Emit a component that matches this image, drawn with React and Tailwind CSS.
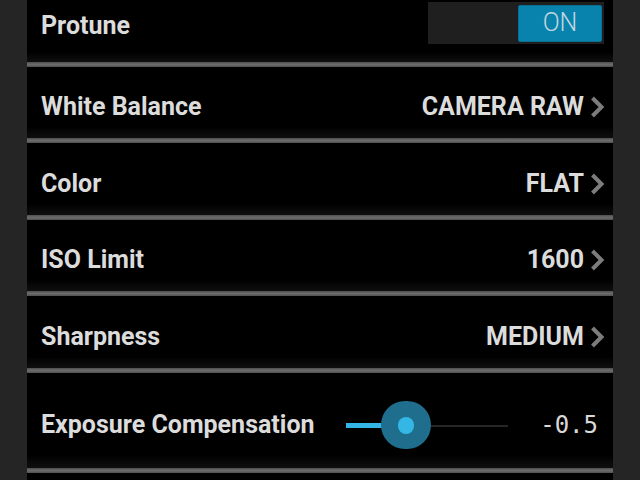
const ROWS = [
  { label: "White Balance", value: "CAMERA RAW", h: "h-[71px]" },
  { label: "Color", value: "FLAT", h: "h-[72px]" },
  { label: "ISO Limit", value: "1600", h: "h-[71px]" },
  { label: "Sharpness", value: "MEDIUM", h: "h-[72px]" },
];

function Separator() {
  return <div className="h-[5px] bg-[linear-gradient(to_bottom,#4e4e4e,#6c6c6c_50%,#505050)]" />;
}

function Chevron() {
  return (
    <svg width="15" height="22" viewBox="0 0 15 22" className="ml-[6px] shrink-0">
      <polyline points="2.5,2 11.5,11 2.5,20" fill="none" stroke="#7c7c7c" strokeWidth="4" strokeLinecap="butt" />
    </svg>
  );
}

export default function App() {
  return (
    <div
      className="w-[640px] h-[480px] overflow-hidden bg-[#252525] flex"
      style={{ fontFamily: "Roboto, 'Liberation Sans', sans-serif" }}
    >
      <div className="w-[586px] ml-[27px] bg-black flex flex-col text-[#dcdcdc]">
        {/* Protune - scrolled partly off top */}
        <div className="h-[62px] shrink-0 flex items-start pl-[14px] pr-[9px] bg-[linear-gradient(to_bottom,#000_84%,#0f0f0f)]">
          <span className="mt-[7px] text-[25px] font-bold">Protune</span>
          <div className="ml-auto mt-[2px] w-[176px] h-[42px] bg-[#1f1f1f] flex justify-end items-center pr-[2px]">
            <div className="w-[84px] h-[37px] bg-[#0883ae] border border-[#0a6f93] rounded-[2px] flex items-center justify-center text-[25px] font-light text-[#c3d6de]">
              ON
            </div>
          </div>
        </div>
        <Separator />

        {ROWS.map((r) => (
          <div key={r.label}>
            <div className={`${r.h} flex items-center pt-[9px] pl-[14px] pr-[8px] bg-[linear-gradient(to_bottom,#000_84%,#0f0f0f)]`}>
              <span className="text-[25px] font-bold">{r.label}</span>
              <span className="ml-auto text-[25px] font-bold">{r.value}</span>
              <Chevron />
            </div>
            <Separator />
          </div>
        ))}

        {/* Exposure compensation */}
        <div className="h-[95px] shrink-0 flex items-center pt-[8px] pl-[14px] bg-[linear-gradient(to_bottom,#000_86%,#0f0f0f)]">
          <span className="w-[305px] text-[25px] font-bold whitespace-nowrap">Exposure Compensation</span>
          <div className="relative w-[162px] h-[50px] mt-[2px]">
            <div className="absolute left-0 right-0 top-[24px] h-[2px] bg-[#262626]" />
            <div className="absolute left-0 w-[60px] top-[22px] h-[5px] bg-[#33b5e5]" />
            <div className="absolute left-[35px] top-0 w-[50px] h-[48px] rounded-full bg-[#1f6e8d]" />
            <div className="absolute left-[52px] top-[16px] w-[16px] h-[17px] rounded-full bg-[#35b7e6]" />
          </div>
          <span
            className="flex-1 text-right pr-[15px] text-[24px] text-[#d8d8d8]"
            style={{ fontFamily: "'DejaVu Sans Mono', monospace" }}
          >
            -0.5
          </span>
        </div>
        <Separator />
        <div className="flex-1 bg-black" />
      </div>
    </div>
  );
}
